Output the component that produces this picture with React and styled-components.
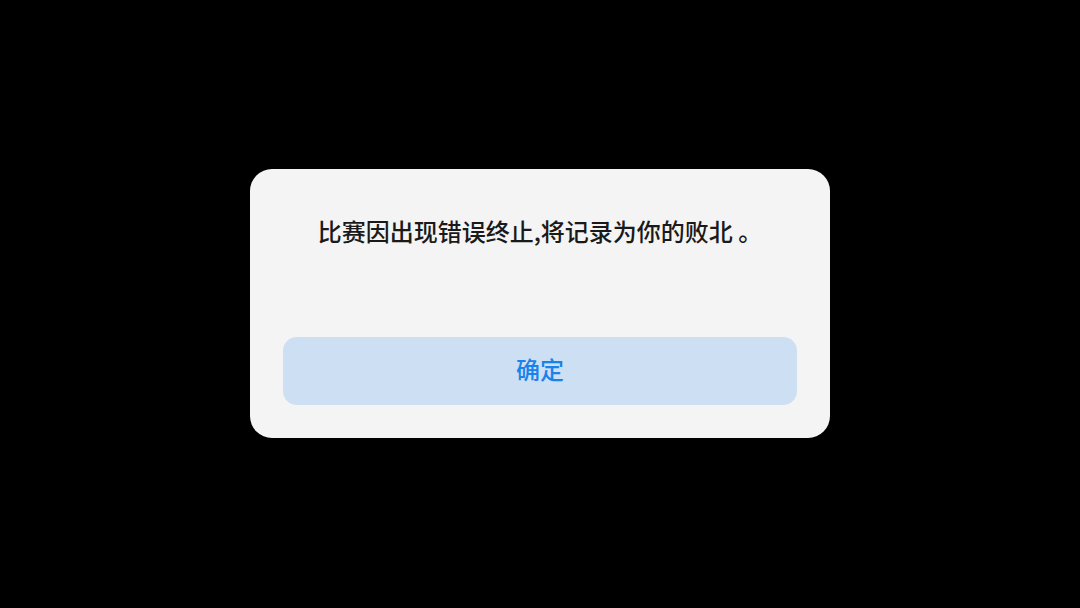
import React from "react";
import styled, { createGlobalStyle } from "styled-components";

const GlobalStyle = createGlobalStyle`
  html, body {
    margin: 0;
    padding: 0;
    background: #000;
  }
  body {
    font-family: "Noto Sans CJK SC", "Noto Sans", sans-serif;
  }
`;

const Screen = styled.main`
  width: 1080px;
  height: 608px;
  display: flex;
  align-items: center;
  justify-content: center;
  background: #000;
`;

const Dialog = styled.section`
  width: 580px;
  height: 269px;
  box-sizing: border-box;
  margin-top: -2px;
  padding: 0 33px 33px;
  background: #f4f4f4;
  border-radius: 22px;
  display: flex;
  flex-direction: column;
`;

const Message = styled.p`
  flex: 1;
  margin: 0;
  padding-top: 46px;
  text-align: center;
  font-size: 24px;
  line-height: 32px;
  font-weight: 500;
  color: #1a1a1a;
`;

const ConfirmButton = styled.button`
  height: 68px;
  width: 100%;
  padding: 0 0 4px;
  border: none;
  border-radius: 14px;
  background: #cddff3;
  color: #1a82ea;
  font-family: inherit;
  font-size: 24px;
  font-weight: 500;
  cursor: pointer;
`;

export default function App() {
  return (
    <>
      <GlobalStyle />
      <Screen>
        <Dialog>
          <Message>比赛因出现错误终止,将记录为你的败北 。</Message>
          <ConfirmButton>确定</ConfirmButton>
        </Dialog>
      </Screen>
    </>
  );
}
